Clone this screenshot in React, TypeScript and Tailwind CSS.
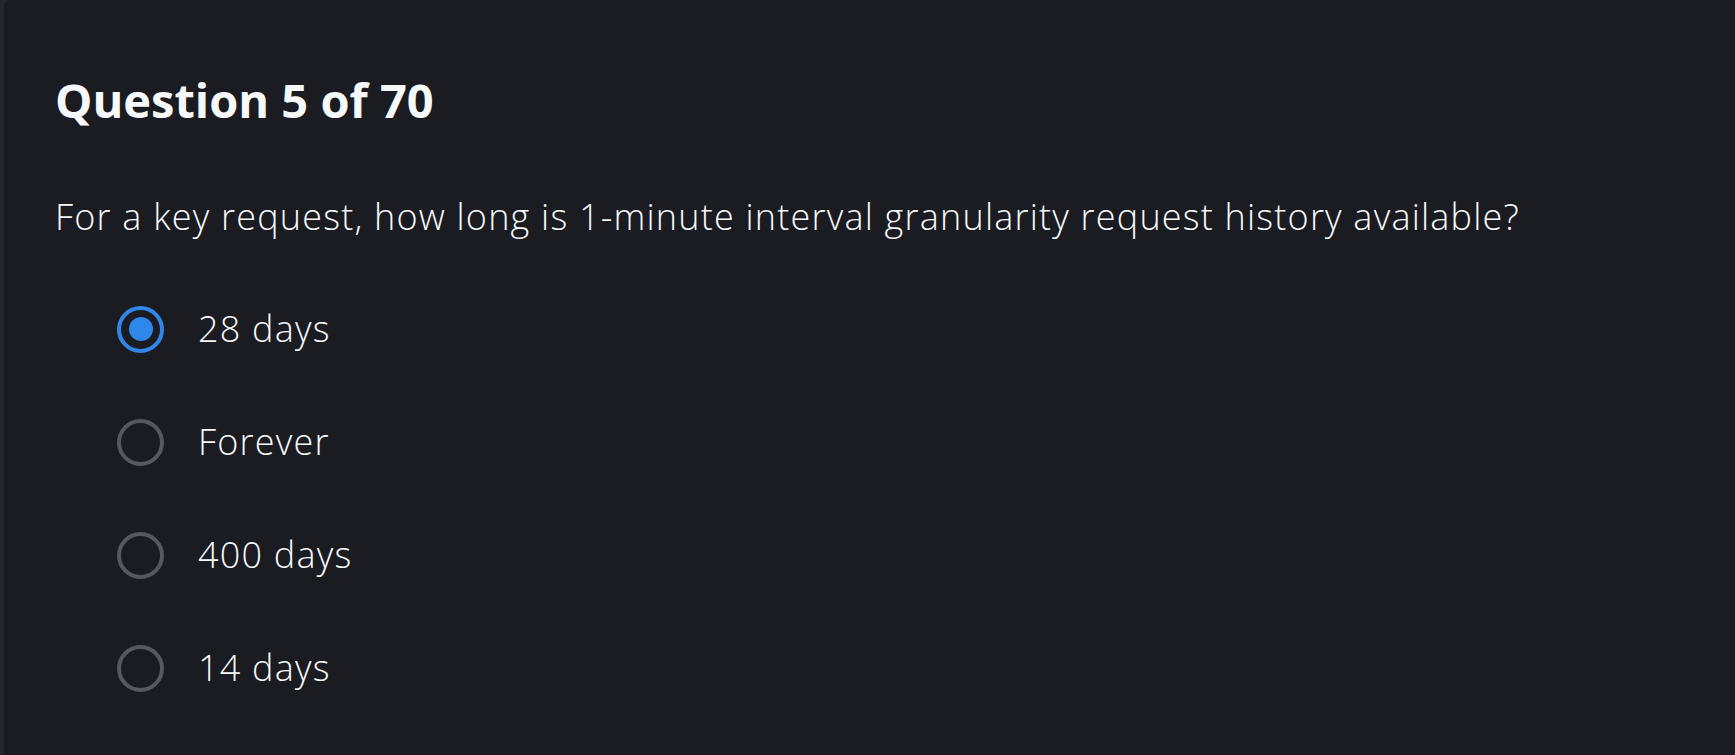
const options = ["28 days", "Forever", "400 days", "14 days"];

function Radio({ checked }: { checked: boolean }) {
  return (
    <span
      className={
        "flex h-[47px] w-[47px] shrink-0 items-center justify-center rounded-full border-[4px] " +
        (checked ? "border-[#2f87ea]" : "border-[#55585e]")
      }
    >
      {checked && <span className="h-[24px] w-[24px] rounded-full bg-[#2f87ea]" />}
    </span>
  );
}

export default function App() {
  return (
    <div className="h-[755px] w-full bg-[#24272c] pl-[4px] font-['Open_Sans',sans-serif] text-[#f7f8fa]">
      <div className="h-full rounded-tl-[6px] bg-[#1a1c21] pl-[51px] pt-[70px]">
        <h2 className="text-[47px] font-bold leading-[60px]">Question 5 of 70</h2>
        <p className="mt-[64px] text-[36px] font-light leading-[46px] tracking-[1.2px]">
          For a key request, how long is 1-minute interval granularity request history available?
        </p>
        <div className="mt-[65px] flex flex-col gap-[65px] pl-[62px]">
          {options.map((o, i) => (
            <label key={o} className="flex h-[48px] items-center gap-[34px]">
              <Radio checked={i === 0} />
              <span className="text-[36px] font-light leading-[46px] tracking-[1.2px]">{o}</span>
            </label>
          ))}
        </div>
      </div>
    </div>
  );
}
